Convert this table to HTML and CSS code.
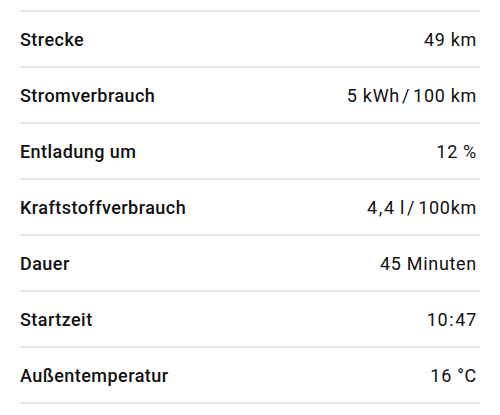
FILE: index.html
```html
<!DOCTYPE html>
<html lang="de">
<head>
<meta charset="utf-8">
<link rel="stylesheet" href="styles.css">
</head>
<body>
<ul class="list">
  <li class="row"><span class="label">Strecke</span><span class="value">49 km</span></li>
  <li class="row"><span class="label">Stromverbrauch</span><span class="value">5 kWh<span class="slash">/</span>100 km</span></li>
  <li class="row"><span class="label">Entladung um</span><span class="value">12 %</span></li>
  <li class="row"><span class="label">Kraftstoffverbrauch</span><span class="value">4<span class="comma">,</span>4 l<span class="slash">/</span>100km</span></li>
  <li class="row"><span class="label">Dauer</span><span class="value">45 Minuten</span></li>
  <li class="row"><span class="label">Startzeit</span><span class="value">10<span class="colon">:</span>47</span></li>
  <li class="row"><span class="label">Außentemperatur</span><span class="value">16 °C</span></li>
</ul>
</body>
</html>
```
FILE: styles.css
```css
html, body {
  margin: 0;
  padding: 0;
  background: #ffffff;
}
body {
  font-family: Roboto, "Liberation Sans", sans-serif;
  color: #111111;
}
.list {
  list-style: none;
  margin: 0;
  padding: 10px 20px 0 20px;
}
.row {
  display: flex;
  justify-content: space-between;
  align-items: center;
  height: 54px;
  border-top: 2px solid #e6e6e6;
  font-size: 18px;
}
.row:last-child {
  border-bottom: 2px solid #e6e6e6;
}
.label {
  font-weight: 500;
  letter-spacing: 0.45px;
}
.value {
  font-weight: 400;
  letter-spacing: 0.7px;
  padding-right: 3px;
}
.slash {
  padding: 0 3px 0 2px;
}
.comma {
  padding: 0 1px;
}
.colon {
  padding: 0 1px;
}
```
